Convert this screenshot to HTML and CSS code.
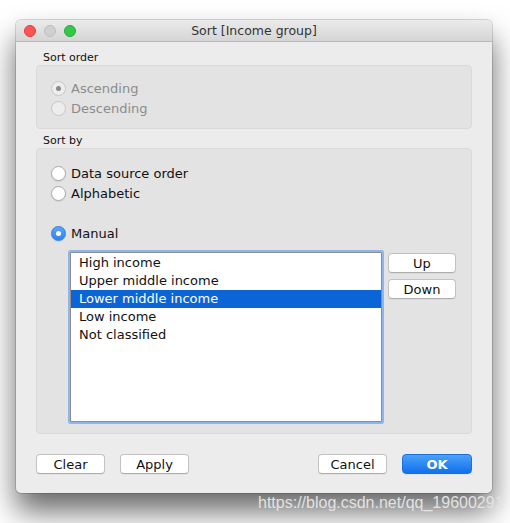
FILE: index.html
```html
<!DOCTYPE html>
<html>
<head>
    <title>Sort [Income group]</title>
    <link rel="stylesheet" href="styles.css">
</head>
<body>
    <div class="window">
        <div class="titlebar">
            <div class="lights">
                <span class="light red"></span>
                <span class="light gray"></span>
                <span class="light green"></span>
            </div>
            <div class="title">Sort [Income group]</div>
        </div>

        <div class="content">
            <div class="section_label">Sort order</div>
            <div class="group group_order">
                <div class="radio_row disabled"><span class="radio checked"></span>Ascending</div>
                <div class="radio_row disabled"><span class="radio"></span>Descending</div>
            </div>

            <div class="section_label spaced">Sort by</div>
            <div class="group group_by">
                <div class="radio_row"><span class="radio"></span>Data source order</div>
                <div class="radio_row"><span class="radio"></span>Alphabetic</div>
                <div class="radio_row manual"><span class="radio active"></span>Manual</div>

                <div class="manual_area">
                    <div class="listbox">
                        <div class="item">High income</div>
                        <div class="item">Upper middle income</div>
                        <div class="item selected">Lower middle income</div>
                        <div class="item">Low income</div>
                        <div class="item">Not classified</div>
                    </div>
                    <div class="side_buttons">
                        <button class="btn small">Up</button>
                        <button class="btn small">Down</button>
                    </div>
                </div>
            </div>

            <div class="footer">
                <div class="footer_left">
                    <button class="btn">Clear</button>
                    <button class="btn">Apply</button>
                </div>
                <div class="footer_right">
                    <button class="btn">Cancel</button>
                    <button class="btn primary">OK</button>
                </div>
            </div>
        </div>
    </div>

    <div class="watermark">https://blog.csdn.net/qq_19600291</div>
</body>
</html>
```

FILE: styles.css
```css
body {
    margin: 0;
    padding: 0;
    background-color: #fff;
    font-family: 'DejaVu Sans', 'Noto Sans', sans-serif;
    color: #1a1a1a;
    position: relative;
    height: 523px;
    overflow: hidden;
}

.window {
    width: 476px;
    height: 473px;
    margin: 20px 0 0 16px;
    background-color: #ececec;
    border-radius: 5px;
    box-shadow: 0 0 0 1px rgba(0, 0, 0, 0.14), 0 18px 30px rgba(0, 0, 0, 0.6);
    overflow: hidden;
}

.titlebar {
    height: 21px;
    position: relative;
    background: linear-gradient(#ebebeb, #d5d5d5);
    border-bottom: 1px solid #b9b9b9;
    display: flex;
    align-items: center;
}

.lights {
    display: flex;
    gap: 8px;
    padding-left: 8px;
}

.light {
    width: 12px;
    height: 12px;
    border-radius: 50%;
    box-sizing: border-box;
}

.light.red {
    background-color: #fc5753;
    border: 1px solid #df3d38;
}

.light.gray {
    background-color: #d0d0d0;
    border: 1px solid #bdbdbd;
}

.light.green {
    background-color: #34c84a;
    border: 1px solid #24a93a;
}

.title {
    position: absolute;
    left: 0;
    right: 0;
    text-align: center;
    font-size: 12.5px;
    color: #333;
}

.content {
    padding: 9px 20px 0 20px;
}

.section_label {
    font-size: 11px;
    line-height: 14px;
    padding-left: 7px;
    color: #111;
}

.section_label.spaced {
    margin-top: 5px;
}

.group {
    background-color: #e3e3e3;
    border: 1px solid #dadada;
    border-radius: 4px;
    box-sizing: border-box;
}

.group_order {
    height: 64px;
    padding: 12px 0 0 14px;
}

.group_by {
    height: 286px;
    padding: 14px 0 0 14px;
}

.radio_row {
    display: flex;
    align-items: center;
    height: 20px;
    font-size: 13px;
    gap: 5px;
    color: #111;
}

.radio_row.disabled {
    color: #8c8c8c;
}

.radio_row.manual {
    margin-top: 20px;
}

.radio {
    width: 15px;
    height: 15px;
    box-sizing: border-box;
    border-radius: 50%;
    background-color: #fff;
    border: 1px solid #a9a9a9;
    box-shadow: 0 1px 1px rgba(0, 0, 0, 0.08);
    position: relative;
}

.disabled .radio {
    background-color: #ededed;
    border-color: #c6c6c6;
    box-shadow: none;
}

.radio.checked::after,
.radio.active::after {
    content: "";
    position: absolute;
    width: 5px;
    height: 5px;
    border-radius: 50%;
    left: 4px;
    top: 4px;
    background-color: #8a8a8a;
}

.radio.active {
    background: linear-gradient(#5aa6fb, #2d84ef);
    border-color: #2f7ee0;
}

.radio.active::after {
    background-color: #fff;
}

.manual_area {
    display: flex;
    gap: 6px;
    margin-top: 8px;
    padding-left: 17px;
}

.listbox {
    width: 312px;
    height: 170px;
    box-sizing: border-box;
    background-color: #fff;
    border: 1px solid #8e8e8e;
    box-shadow: 0 0 0 2px #8fb6ec;
    border-radius: 1px;
    margin: 1px 0 0 2px;
    padding-top: 1px;
}

.item {
    height: 18px;
    line-height: 18px;
    font-size: 13px;
    padding-left: 8px;
    color: #111;
}

.item.selected {
    background-color: #0b65d7;
    color: #fff;
}

.side_buttons {
    display: flex;
    flex-direction: column;
    gap: 6px;
    padding-top: 2px;
}

.btn {
    width: 69px;
    height: 20px;
    padding: 0;
    font-family: 'DejaVu Sans', 'Noto Sans', sans-serif;
    font-size: 13px;
    color: #111;
    background-color: #fff;
    border: 1px solid #c2c2c2;
    border-bottom-color: #adadad;
    border-radius: 4px;
    box-shadow: 0 1px 0 rgba(0, 0, 0, 0.04);
}

.btn.small {
    width: 68px;
}

.btn.primary {
    width: 70px;
    background: linear-gradient(#4ba1fb, #1170ec);
    border-color: #1a6fdc;
    color: #fff;
    font-weight: bold;
}

.footer {
    display: flex;
    justify-content: space-between;
    margin-top: 20px;
}

.footer_left,
.footer_right {
    display: flex;
    gap: 15px;
}

.watermark {
    position: absolute;
    left: 258px;
    top: 494px;
    font-family: 'Liberation Sans', Arial, sans-serif;
    font-size: 16px;
    color: #e2e2e2;
    white-space: nowrap;
}
```
